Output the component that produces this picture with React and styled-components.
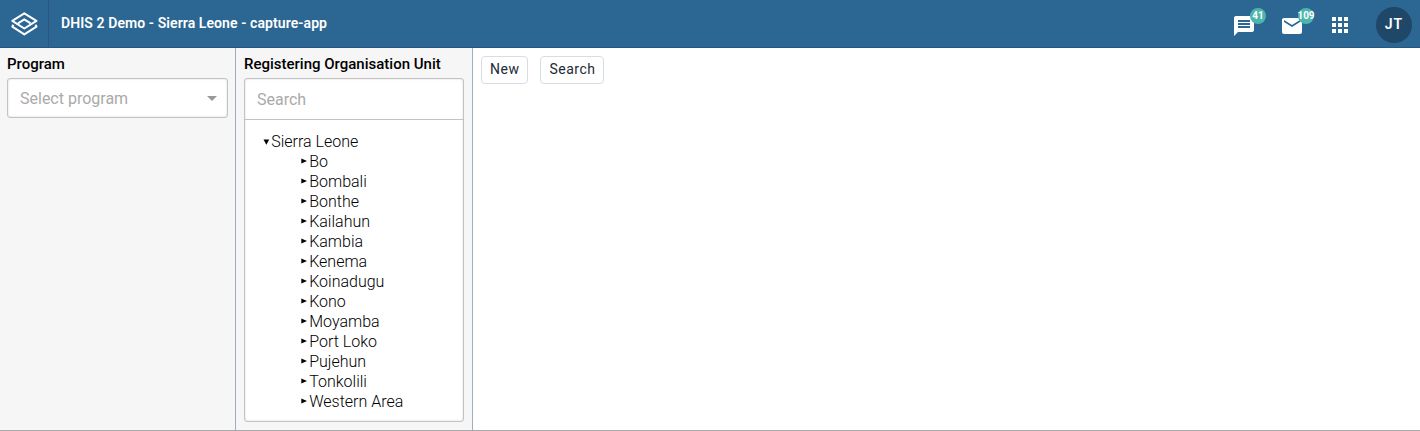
import React from 'react';
import styled, { createGlobalStyle } from 'styled-components';

const GlobalStyle = createGlobalStyle`
  *, *::before, *::after { box-sizing: border-box; }
  body { margin: 0; background: #fff; font-family: Roboto, "Liberation Sans", sans-serif; color: #000; }
`;

const Page = styled.div`
  display: flex;
  flex-direction: column;
  height: 431px;
  overflow: hidden;
  border-bottom: 1px solid #a9a9a9;
`;

const HeaderBar = styled.header`
  flex: none;
  display: flex;
  align-items: center;
  height: 48px;
  background: #2c6693;
  border-bottom: 1px solid #265780;
  color: #fff;
`;

const LogoLink = styled.div`
  display: flex;
  align-items: center;
  justify-content: center;
  width: 49px;
  height: 47px;
  border-right: 1px solid #28587f;
`;

const Title = styled.div`
  flex: 1;
  padding: 0 0 1px 12px;
  font-size: 14px;
  font-weight: 600;
  line-height: 18px;
  letter-spacing: 0.09px;
`;

const HeaderActions = styled.div`
  display: flex;
  align-items: center;
  height: 47px;
  padding-right: 8px;
`;

const HeaderIcon = styled.div`
  position: relative;
  display: flex;
  width: 24px;
  height: 24px;
  margin: ${(p) => (p.$raised ? 3 : 5)}px 24px 0 0;
  svg { display: block; fill: #fff; }
`;

const Badge = styled.span`
  position: absolute;
  top: -6px;
  right: -10px;
  width: 16px;
  height: 16px;
  border-radius: 8px;
  background: #4db6ac;
  font-size: 10px;
  font-weight: 700;
  line-height: 16px;
  letter-spacing: -0.1px;
  display: flex;
  justify-content: center;
`;

const Avatar = styled.div`
  width: 36px;
  height: 36px;
  margin: 2px 0 0 0;
  border-radius: 50%;
  background: #1f4768;
  font-size: 14px;
  font-weight: 600;
  line-height: 35px;
  letter-spacing: 1px;
  text-align: center;
`;

const Workspace = styled.div`
  flex: 1;
  display: flex;
  min-height: 0;
`;

const SelectorPanel = styled.section`
  flex: none;
  width: ${(p) => p.$width}px;
  padding: 6px 8px 0 ${(p) => p.$inset}px;
  background: #f6f6f6;
  border-right: 1px solid #a0adba;
`;

const PanelLabel = styled.h2`
  margin: 0 0 4px;
  font-size: 15px;
  font-weight: 500;
  line-height: 20px;
`;

const boxed = `
  border: 1px solid #c3c3c3;
  border-radius: 3px;
  background: #fff;
  box-shadow: inset 0 0 2px #ccc;
`;

const Select = styled.div`
  ${boxed}
  display: flex;
  align-items: center;
  justify-content: space-between;
  width: 221px;
  height: 40px;
  padding: 0 10px 0 12px;
  color: #aaa;
  font-size: 16px;
`;

const Caret = styled.span`
  border: 5px solid transparent;
  border-top-color: #999;
  border-bottom-width: 0;
`;

const UnitPicker = styled.div`
  ${boxed}
  height: 344px;
`;

const SearchInput = styled.div`
  height: 41px;
  padding-left: 12px;
  border-bottom: 1px solid #c3c3c3;
  color: #aaa;
  font-size: 16px;
  line-height: 41px;
`;

const Tree = styled.div`
  padding: 12px 0 0 17px;
`;

const TreeBranch = styled.div`
  padding-left: 38px;
`;

const TreeItem = styled.div`
  display: flex;
  align-items: center;
  gap: 1.2px;
  height: 20px;
  font-size: 16px;
  font-weight: 300;
  line-height: 20px;
`;

const TreeArrow = styled.svg`
  flex: none;
  width: 8px;
  height: 8px;
  margin-top: ${(p) => (p.$open ? -1 : -3)}px;
`;

const Main = styled.main`
  flex: 1;
  display: flex;
  align-items: flex-start;
  gap: 12px;
  padding: 8px;
`;

const Button = styled.button`
  height: 28px;
  padding: 0 8px 2px;
  border: 1px solid #d5dde5;
  border-radius: 4px;
  background: #fff;
  color: #212934;
  font: 400 14px/24px Roboto, "Liberation Sans", sans-serif;
  letter-spacing: 0.5px;
`;

const districts = [
  'Bo', 'Bombali', 'Bonthe', 'Kailahun', 'Kambia', 'Kenema', 'Koinadugu',
  'Kono', 'Moyamba', 'Port Loko', 'Pujehun', 'Tonkolili', 'Western Area',
];

const TreeNode = ({ name, open }) => (
  <TreeItem>
    <TreeArrow $open={open} viewBox="0 0 8 8">
      <path d={open ? 'M1.500 1.500H7.200L4.350 6.800Z' : 'M1.300 1.500L7 4L1.300 6.500Z'} />
    </TreeArrow>
    {name}
  </TreeItem>
);

const Logo = () => (
  <svg width="28" height="26" viewBox="0 0 28 26" fill="none" stroke="#fff" strokeWidth="2" strokeLinejoin="round">
    <path d="M14.300 2.300L26.500 9.900L14.300 17.500L2.300 9.900Z" />
    <path d="M8 12.300L14.300 8.300L20.600 12.300" />
    <path d="M3.300 13.700L2.300 15.600L14.300 23.400L26.500 15.600L25.500 13.700" />
  </svg>
);

export default function App() {
  return (
    <Page>
      <GlobalStyle />
      <HeaderBar>
        <LogoLink><Logo /></LogoLink>
        <Title>DHIS 2 Demo - Sierra Leone - capture-app</Title>
        <HeaderActions>
          <HeaderIcon>
            <svg width="24" height="24" viewBox="0 0 24 24">
              <path d="M20 2H4c-1.100 0-1.990.9-1.990 2L2 22l4-4h14c1.100 0 2-.9 2-2V4c0-1.100-.9-2-2-2zM6 9h12v2H6V9zm12 5H6v-2h12v2zm0-6H6V6h12v2z" />
            </svg>
            <Badge>41</Badge>
          </HeaderIcon>
          <HeaderIcon>
            <svg width="24" height="24" viewBox="0 0 24 24">
              <path d="M20 4H4c-1.100 0-1.990.9-1.990 2L2 18c0 1.100.9 2 2 2h16c1.100 0 2-.9 2-2V6c0-1.100-.9-2-2-2zm0 4l-8 5-8-5V6l8 5 8-5v2z" />
            </svg>
            <Badge>109</Badge>
          </HeaderIcon>
          <HeaderIcon $raised>
            <svg width="24" height="24" viewBox="0 0 24 24">
              <path d="M4 8h4V4H4v4zm6 12h4v-4h-4v4zm-6 0h4v-4H4v4zm0-6h4v-4H4v4zm6 0h4v-4h-4v4zm6-10v4h4V4h-4zm-6 4h4V4h-4v4zm6 6h4v-4h-4v4zm0 6h4v-4h-4v4z" />
            </svg>
          </HeaderIcon>
          <Avatar>JT</Avatar>
        </HeaderActions>
      </HeaderBar>
      <Workspace>
        <SelectorPanel $width={236} $inset={7}>
          <PanelLabel>Program</PanelLabel>
          <Select>Select program<Caret /></Select>
        </SelectorPanel>
        <SelectorPanel $width={237} $inset={8}>
          <PanelLabel>Registering Organisation Unit</PanelLabel>
          <UnitPicker>
            <SearchInput>Search</SearchInput>
            <Tree>
              <TreeNode name="Sierra Leone" open />
              <TreeBranch>
                {districts.map((name) => <TreeNode key={name} name={name} />)}
              </TreeBranch>
            </Tree>
          </UnitPicker>
        </SelectorPanel>
        <Main>
          <Button>New</Button>
          <Button>Search</Button>
        </Main>
      </Workspace>
    </Page>
  );
}
